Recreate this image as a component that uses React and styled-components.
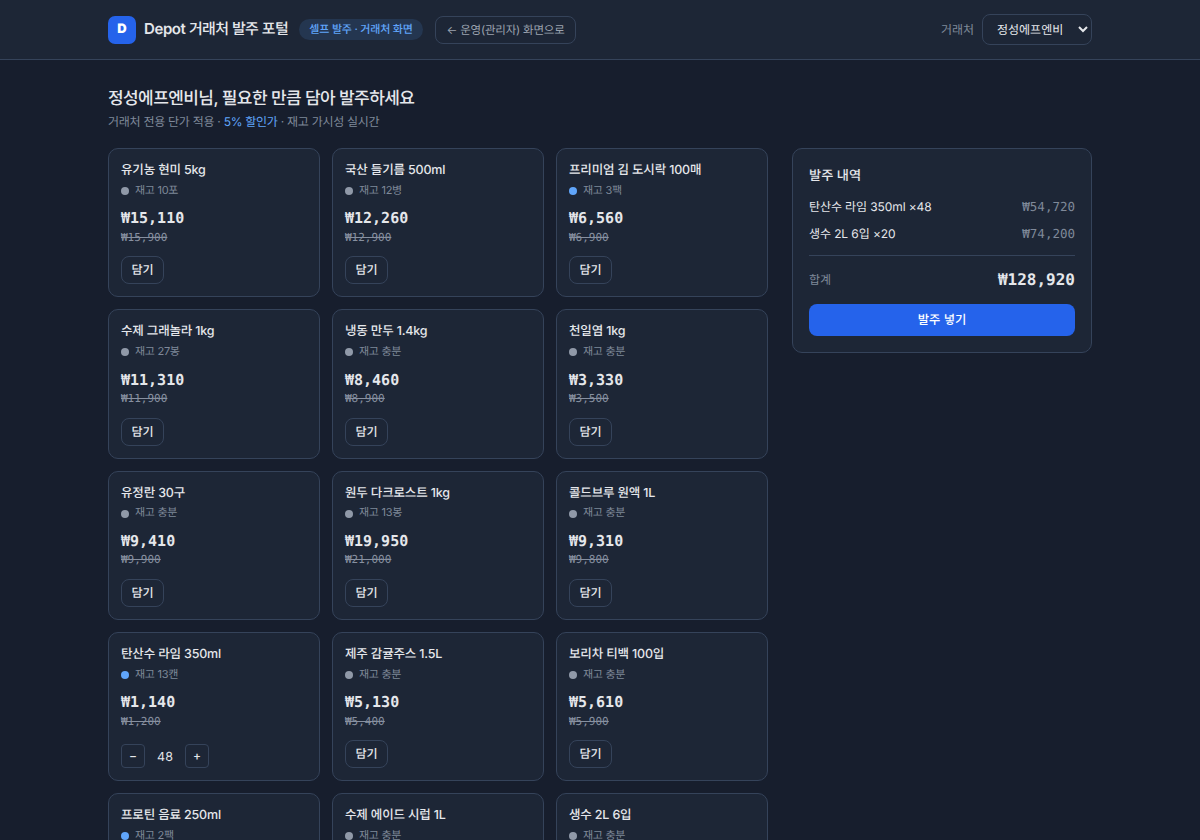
import { useState } from "react";
import styled, { createGlobalStyle } from "styled-components";

const GlobalStyle = createGlobalStyle`
  * {
    box-sizing: border-box;
  }
  html {
    overflow: hidden;
  }
  body {
    margin: 0;
    height: 840px;
    overflow: hidden;
    background: #171e2d;
    color: #e5e7eb;
    font-family: Inter, "Noto Sans CJK KR", sans-serif;
    font-size: 13px;
    line-height: 1.5;
    text-rendering: geometricPrecision;
  }
  button, select {
    font-family: inherit;
    color: inherit;
    text-rendering: inherit;
  }
`;

const mono = `"DejaVu Sans Mono", "Liberation Mono", monospace`;

const Header = styled.header`
  height: 60px;
  background: #1d2636;
  border-bottom: 1px solid #35435a;
`;

const HeaderInner = styled.div`
  width: 984px;
  height: 59px;
  margin: 0 auto;
  display: flex;
  align-items: center;
`;

const Logo = styled.div`
  width: 28px;
  height: 28px;
  padding-top: 1px;
  border-radius: 7px;
  background: #2563eb;
  color: #fff;
  font-size: 13px;
  font-weight: 900;
  display: grid;
  place-items: center;
`;

const Brand = styled.div`
  margin-left: 8px;
  width: 143px;
  font-size: 15px;
  font-weight: 500;
  line-height: 22px;
  letter-spacing: -0.6px;
  white-space: nowrap;
  padding-bottom: 2px;
`;

const BrandName = styled.span`
  font-weight: 600;
  letter-spacing: -0.4px;
`;

const ModeBadge = styled.span`
  margin-left: 12px;
  width: 124px;
  height: 21px;
  line-height: 20px;
  border-radius: 11px;
  background: #243650;
  color: #60a5fa;
  font-size: 11px;
  font-weight: 500;
  letter-spacing: -0.2px;
  text-align: center;
  white-space: nowrap;
`;

const AdminButton = styled.button`
  margin-left: 12px;
  width: 141px;
  height: 28px;
  padding: 0;
  border: 1px solid #35435a;
  border-radius: 8px;
  background: transparent;
  color: #9ca3af;
  font-size: 11.5px;
  letter-spacing: -0.2px;
  white-space: nowrap;
`;

const ClientPicker = styled.label`
  margin-left: auto;
  display: flex;
  align-items: center;
  gap: 8px;
  color: #7f8999;
  font-size: 12px;
`;

const ClientSelect = styled.select`
  width: 110px;
  height: 31px;
  padding: 0 0 0 10px;
  border: 1px solid #35435a;
  border-radius: 8px;
  background: #1d2636;
  color: #e5e7eb;
  font-size: 12px;
`;

const Main = styled.main`
  width: 984px;
  margin: 0 auto;
  padding-top: 26px;
`;

const Title = styled.h1`
  margin: 0;
  font-size: 17px;
  font-weight: 500;
  line-height: 27px;
  letter-spacing: -0.58px;
`;

const Subtitle = styled.p`
  margin: -1px 0 16px;
  color: #7f8999;
  font-size: 12px;
  line-height: 20px;
  letter-spacing: -0.27px;
`;

const Discount = styled.span`
  color: #60a5fa;
`;

const Columns = styled.div`
  display: grid;
  grid-template-columns: 660px 300px;
  gap: 24px;
  align-items: start;
`;

const ProductGrid = styled.div`
  display: grid;
  grid-template-columns: repeat(3, 1fr);
  gap: 12px;
`;

const Panel = styled.section`
  background: #1d2636;
  border: 1px solid #35435a;
  border-radius: 10px;
`;

const Card = styled(Panel)`
  height: 149.3px;
  padding: 12px 12px 12px;
  display: flex;
  flex-direction: column;
  align-items: flex-start;
`;

const ProductName = styled.div`
  font-size: 12.5px;
  font-weight: 500;
  line-height: 20px;
  letter-spacing: -0.17px;
`;

const Stock = styled.div`
  margin-top: -0.3px;
  display: flex;
  align-items: center;
  gap: 6px;
  color: #7f8999;
  font-size: 11px;
  line-height: 18px;
  letter-spacing: -0.28px;
`;

const Dot = styled.span`
  width: 8px;
  height: 8px;
  margin-top: 2.6px;
  border-radius: 50%;
  background: ${p => (p.$low ? "#60a5fa" : "#9099a8")};
`;

const Price = styled.div`
  margin-top: 8.6px;
  font-family: ${mono};
  font-size: 15px;
  font-weight: 700;
  line-height: 22px;
`;

const ListPrice = styled.div`
  margin-top: 0.4px;
  font-family: ${mono};
  font-size: 11px;
  line-height: 16px;
  color: #8790a0;
  text-decoration: line-through;
`;

const AddButton = styled.button`
  margin-top: auto;
  width: 43px;
  height: 28px;
  padding: 0 0 1px;
  border: 1px solid #35435a;
  border-radius: 8px;
  background: transparent;
  font-size: 12px;
  font-weight: 500;
`;

const Stepper = styled.div`
  margin-top: auto;
  display: flex;
  align-items: center;
`;

const StepButton = styled.button`
  width: 24px;
  height: 24px;
  padding: 0 0 1px;
  border: 1px solid #35435a;
  border-radius: 4px;
  background: transparent;
  font-size: 12px;
  font-weight: 500;
`;

const Quantity = styled.span`
  width: 40px;
  padding-top: 3px;
  line-height: 20px;
  text-align: center;
  font-size: 12.5px;
`;

const Order = styled(Panel)`
  height: 205px;
  padding: 16px 16px 16px;
`;

const OrderTitle = styled.h2`
  margin: 0 0 7px;
  font-size: 13.2px;
  font-weight: 500;
  line-height: 22px;
`;

const OrderLine = styled.div`
  display: flex;
  justify-content: space-between;
  align-items: center;
  height: 27px;
  font-size: 12px;
  letter-spacing: -0.1px;
`;

const LineName = styled.span`
  padding-bottom: 2px;
`;

const LineAmount = styled.span`
  font-family: ${mono};
  font-size: 12.5px;
  letter-spacing: 0;
  color: #7f8999;
`;

const TotalLine = styled.div`
  display: flex;
  justify-content: space-between;
  align-items: center;
  margin-top: 7px;
  height: 49px;
  border-top: 1px solid #35435a;
  color: #7f8999;
  font-size: 12px;
`;

const TotalAmount = styled.strong`
  font-family: ${mono};
  font-size: 16px;
  color: #e5e7eb;
`;

const SubmitButton = styled.button`
  width: 100%;
  height: 32px;
  padding: 0 0 3px;
  border: 0;
  border-radius: 8px;
  background: #2563eb;
  color: #fff;
  font-size: 12.3px;
  font-weight: 500;
`;

const products = [
  { name: "유기농 현미 5kg", stock: "10포", price: 15110, list: 15900 },
  { name: "국산 들기름 500ml", stock: "12병", price: 12260, list: 12900 },
  { name: "프리미엄 김 도시락 100매", stock: "3팩", price: 6560, list: 6900, low: true },
  { name: "수제 그래놀라 1kg", stock: "27봉", price: 11310, list: 11900 },
  { name: "냉동 만두 1.4kg", stock: "충분", price: 8460, list: 8900 },
  { name: "천일염 1kg", stock: "충분", price: 3330, list: 3500 },
  { name: "유정란 30구", stock: "충분", price: 9410, list: 9900 },
  { name: "원두 다크로스트 1kg", stock: "13봉", price: 19950, list: 21000 },
  { name: "콜드브루 원액 1L", stock: "충분", price: 9310, list: 9800 },
  { name: "탄산수 라임 350ml", stock: "13캔", price: 1140, list: 1200, low: true },
  { name: "제주 감귤주스 1.5L", stock: "충분", price: 5130, list: 5400 },
  { name: "보리차 티백 100입", stock: "충분", price: 5610, list: 5900 },
  { name: "프로틴 음료 250ml", stock: "2팩", price: 2660, list: 2800, low: true },
  { name: "수제 에이드 시럽 1L", stock: "충분", price: 8550, list: 9000 },
  { name: "생수 2L 6입", stock: "충분", price: 3710, list: 3900 }
];

const won = n => `₩${n.toLocaleString("en-US")}`;

function ProductCard({ product, qty, setQty }) {
  return (
    <Card>
      <ProductName>{product.name}</ProductName>
      <Stock>
        <Dot $low={product.low} />
        재고 {product.stock}
      </Stock>
      <Price>{won(product.price)}</Price>
      <ListPrice>{won(product.list)}</ListPrice>
      {qty ? (
        <Stepper>
          <StepButton onClick={() => setQty(qty - 1)}>−</StepButton>
          <Quantity>{qty}</Quantity>
          <StepButton onClick={() => setQty(qty + 1)}>+</StepButton>
        </Stepper>
      ) : (
        <AddButton onClick={() => setQty(1)}>담기</AddButton>
      )}
    </Card>
  );
}

export default function App() {
  const [cart, setCart] = useState({ "탄산수 라임 350ml": 48, "생수 2L 6입": 20 });
  const lines = products.filter(p => cart[p.name]);
  const total = lines.reduce((sum, p) => sum + p.price * cart[p.name], 0);

  return (
    <>
      <GlobalStyle />
      <Header>
        <HeaderInner>
          <Logo>D</Logo>
          <Brand>
            <BrandName>Depot</BrandName> 거래처 발주 포털
          </Brand>
          <ModeBadge>셀프 발주 · 거래처 화면</ModeBadge>
          <AdminButton>← 운영(관리자) 화면으로</AdminButton>
          <ClientPicker>
            거래처
            <ClientSelect>
              <option>정성에프엔비</option>
            </ClientSelect>
          </ClientPicker>
        </HeaderInner>
      </Header>
      <Main>
        <Title>정성에프엔비님, 필요한 만큼 담아 발주하세요</Title>
        <Subtitle>
          거래처 전용 단가 적용 · <Discount>5% 할인가</Discount> · 재고 가시성 실시간
        </Subtitle>
        <Columns>
          <ProductGrid>
            {products.map(p => (
              <ProductCard
                key={p.name}
                product={p}
                qty={cart[p.name]}
                setQty={n => setCart({ ...cart, [p.name]: n })}
              />
            ))}
          </ProductGrid>
          <Order>
            <OrderTitle>발주 내역</OrderTitle>
            {lines.map(p => (
              <OrderLine key={p.name}>
                <LineName>
                  {p.name} ×{cart[p.name]}
                </LineName>
                <LineAmount>{won(p.price * cart[p.name])}</LineAmount>
              </OrderLine>
            ))}
            <TotalLine>
              합계
              <TotalAmount>{won(total)}</TotalAmount>
            </TotalLine>
            <SubmitButton>발주 넣기</SubmitButton>
          </Order>
        </Columns>
      </Main>
    </>
  );
}
